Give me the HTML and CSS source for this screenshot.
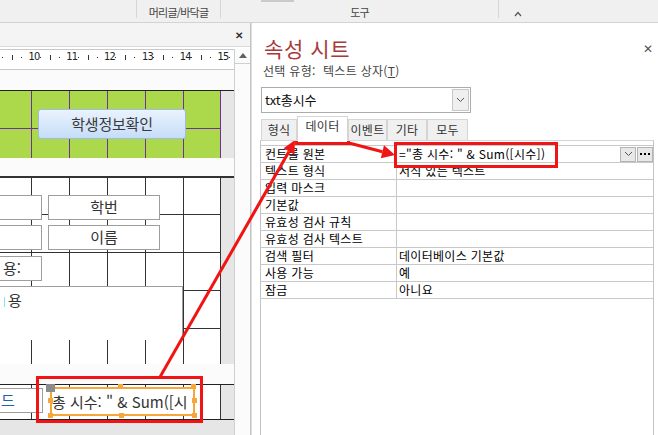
FILE: index.html
```html
<!DOCTYPE html>
<html lang="ko">
<head>
<meta charset="utf-8">
<link rel="stylesheet" href="styles.css">
</head>
<body>
<div class="app">
  <div class="ribbon">
    <div class="rb-spacer"></div>
    <div class="rb-group rb-hf">머리글/바닥글</div>
    <div class="rb-group rb-tools"><span class="rb-mark"></span>도구</div>
    <div class="rb-group rb-end"><svg width="8" height="6" viewBox="0 0 8 6"><polyline points="1,5 4,1.5 7,5" fill="none" stroke="#555" stroke-width="1.2"/></svg></div>
  </div>
  <div class="main">
    <div class="left">
      <div class="lp-title"><span class="lp-x">✕</span></div>
      <div class="lp-body">
        <div class="canvas">
          <div class="ruler">
            <div class="ru-cell"><i class="dot"></i><i class="tick"></i><i class="dot d2"></i><b class="num">10</b></div>
            <div class="ru-cell"><i class="dot"></i><i class="tick"></i><i class="dot d2"></i><b class="num">11</b></div>
            <div class="ru-cell"><i class="dot"></i><i class="tick"></i><i class="dot d2"></i><b class="num">12</b></div>
            <div class="ru-cell"><i class="dot"></i><i class="tick"></i><i class="dot d2"></i><b class="num">13</b></div>
            <div class="ru-cell"><i class="dot"></i><i class="tick"></i><i class="dot d2"></i><b class="num">14</b></div>
            <div class="ru-cell"><i class="dot"></i><i class="tick"></i><i class="dot d2"></i><b class="num">15</b></div>
            <div class="ru-end"><i class="dot"></i></div>
          </div>
          <div class="band band-a"></div>
          <div class="sec sec-green">
            <div class="ga green">
              <div class="btn-info">학생정보확인</div>
            </div>
            <div class="strip strip-purple"></div>
          </div>
          <div class="band band-b"></div>
          <div class="sec sec-detail">
            <div class="ga black">
              <div class="ctl c-a"></div>
              <div class="ctl c-hak">학번</div>
              <div class="ctl c-b"></div>
              <div class="ctl c-name">이름</div>
              <div class="ctl c-yong">용:</div>
              <div class="ctl c-big"><span class="caret"></span>용</div>
            </div>
            <div class="strip"></div>
          </div>
          <div class="band band-c"></div>
          <div class="sec sec-foot">
            <div class="ga black-v">
              <div class="ctl c-field">드</div>
              <div class="c-sel">총 시수: " &amp; Sum([시</div>
              <span class="hd hd-gray"></span>
              <span class="hd hd-tm"></span>
              <span class="hd hd-tr"></span>
              <span class="hd hd-lm"></span>
              <span class="hd hd-rm"></span>
              <span class="hd hd-bl"></span>
              <span class="hd hd-bm"></span>
              <span class="hd hd-br"></span>
            </div>
            <div class="strip"></div>
          </div>
          <div class="grayfill"></div>
        </div>
        <div class="vscroll">
          <div class="vs-up"><svg width="8" height="5" viewBox="0 0 8 5"><polygon points="0,5 4,0 8,5" fill="#606060"/></svg></div>
        </div>
      </div>
    </div>
    <div class="right">
      <div class="rp-head">
        <div class="rp-title">속성 시트</div>
        <div class="rp-close">✕</div>
      </div>
      <div class="rp-sub">선택 유형:&nbsp; 텍스트 상자(<u>T</u>)</div>
      <div class="combo">
        <div class="combo-text">txt총시수</div>
        <div class="combo-btn"><svg width="9" height="6" viewBox="0 0 9 6"><polyline points="1,1 4.5,4.5 8,1" fill="none" stroke="#555" stroke-width="1"/></svg></div>
      </div>
      <div class="tabs">
        <div class="tab t1">형식</div>
        <div class="tab t2 active">데이터</div>
        <div class="tab t3">이벤트</div>
        <div class="tab t4">기타</div>
        <div class="tab t5">모두</div>
      </div>
      <div class="tabpanel">
        <div class="pgrid">
          <div class="pl">컨트롤 원본</div>
          <div class="pv pv-src"><span class="pv-text">="총 시수: " &amp; Sum([시수])</span><span class="mini-btn"><svg width="9" height="6" viewBox="0 0 9 6"><polyline points="1,1 4.5,4.5 8,1" fill="none" stroke="#555" stroke-width="1"/></svg></span><span class="mini-btn dots"><svg width="10" height="4" viewBox="0 0 10 4"><rect x="0" y="1" width="2" height="2" fill="#000"/><rect x="4" y="1" width="2" height="2" fill="#000"/><rect x="8" y="1" width="2" height="2" fill="#000"/></svg></span></div>
          <div class="pl">텍스트 형식</div><div class="pv">서식 있는 텍스트</div>
          <div class="pl">입력 마스크</div><div class="pv"></div>
          <div class="pl">기본값</div><div class="pv"></div>
          <div class="pl">유효성 검사 규칙</div><div class="pv"></div>
          <div class="pl">유효성 검사 텍스트</div><div class="pv"></div>
          <div class="pl">검색 필터</div><div class="pv">데이터베이스 기본값</div>
          <div class="pl">사용 가능</div><div class="pv">예</div>
          <div class="pl">잠금</div><div class="pv">아니요</div>
        </div>
      </div>
    </div>
  </div>
</div>
<svg class="marks" width="658" height="435" viewBox="0 0 658 435">
  <rect x="37.5" y="377.5" width="164" height="44" fill="none" stroke="#f01414" stroke-width="3"/>
  <rect x="296.5" y="120.5" width="52" height="23" fill="none" stroke="#f01414" stroke-width="3"/>
  <rect x="395.5" y="143.5" width="161" height="23" fill="none" stroke="#f01414" stroke-width="3"/>
  <line x1="160" y1="377" x2="289" y2="151.4" stroke="#f01414" stroke-width="3"/>
  <polygon points="295,140 294.4,154.6 283.6,148.2" fill="#f01414"/>
  <line x1="349" y1="143" x2="382.4" y2="151.7" stroke="#f01414" stroke-width="3"/>
  <polygon points="395,155 380.8,158.2 384,145.2" fill="#f01414"/>
</svg>
</body>
</html>
```

FILE: styles.css
```css
* { box-sizing: border-box; }
html, body { margin: 0; padding: 0; }
body {
  width: 658px;
  height: 435px;
  overflow: hidden;
  position: relative;
  background: #fff;
  font-family: "Noto Sans CJK KR", "Noto Sans", sans-serif;
  color: #222;
}
.app { display: flex; flex-direction: column; height: 435px; }

/* ribbon */
.ribbon {
  height: 23px;
  flex: none;
  display: flex;
  background: #f0f0f0;
  border-bottom: 1px solid #d3d3d3;
  font-size: 11px;
  color: #444;
}
.rb-spacer { width: 136px; flex: none; }
.rb-group {
  height: 18px;
  flex: none;
  border-left: 1px solid #d6d6d6;
  display: flex;
  justify-content: center;
  padding-top: 5px;
  line-height: 14px;
  letter-spacing: -0.8px;
  position: relative;
}
.rb-hf { width: 84px; }
.rb-tools { width: 278px; }
.rb-mark { position: absolute; top: 0; left: 40px; width: 33px; height: 2px; background: #cacaca; }
.rb-end { flex: 1; justify-content: flex-start; padding: 11px 0 0 15px; }
.rb-end svg { display: block; }

/* main */
.main { flex: 1; display: flex; min-height: 0; }
.left {
  width: 251px;
  flex: none;
  display: flex;
  flex-direction: column;
  border-right: 1px solid #c4c4c4;
}
.lp-title {
  height: 24px;
  flex: none;
  background: #f4f4f4;
  border-bottom: 1px solid #d9d9d9;
  display: flex;
  justify-content: flex-end;
  align-items: center;
  padding-right: 7px;
  font-size: 10px;
  font-weight: bold;
  color: #333;
}
.lp-body { flex: 1; display: flex; padding-top: 2px; background: #fff; min-height: 0; }
.canvas { width: 234px; flex: none; display: flex; flex-direction: column; overflow: hidden; }
.vscroll { width: 16px; flex: none; border-left: 1px solid #cfcfcf; background: #fbfbfb; }
.vs-up {
  height: 15px;
  border-bottom: 1px solid #cfcfcf;
  display: flex;
  align-items: center;
  justify-content: center;
  padding-bottom: 1px;
}
.vs-up svg { display: block; }

/* ruler */
.ruler {
  height: 21px;
  flex: none;
  border-top: 1px solid #c8c8c8;
  border-bottom: 1px solid #c8c8c8;
  display: flex;
  align-items: center;
  padding-bottom: 5px;
  background: #fff;
}
.ru-cell { width: 37.8px; flex: none; display: flex; align-items: center; }
.ru-cell > * { flex: none; }
.dot { display: block; width: 1px; height: 1px; background: #333; margin-left: 2px; margin-top: 1px; }
.tick { display: block; width: 1px; height: 5px; background: #333; margin-left: 9px; }
.dot.d2 { margin-left: 8px; }
.num {
  display: block;
  width: 12px;
  margin-left: 6px;
  font-family: "DejaVu Sans Condensed", "Liberation Sans", sans-serif;
  font-weight: normal;
  font-size: 11px;
  line-height: 12px;
  letter-spacing: -0.8px;
  text-align: center;
  color: #222;
}
.ru-end { display: flex; align-items: center; }

/* sections */
.band { flex: none; background: #fbfbfb; }
.band-a { height: 20px; }
.band-b { height: 18px; }
.band-c { height: 20px; }
.sec { flex: none; display: flex; }
.sec-green { height: 68px; border-top: 1px solid #222; }
.sec-detail { height: 188px; border-top: 2px solid #333; }
.sec-foot { height: 36px; border-top: 1px solid #222; border-bottom: 1px solid #222; }
.grayfill { flex: 1; background: #e6e6e6; }
.ga { width: 220px; flex: none; position: relative; background-size: 38px 38px; }
.strip { flex: 1; background: #e6e6e6; border-left: 1px solid #333; }
.strip-purple { border-left-color: #7030a0; }
.green {
  background-color: #abd94b;
  background-image:
    linear-gradient(to right, transparent 37px, #7030a0 37px),
    linear-gradient(to bottom, transparent 37px, #7030a0 37px);
  background-position: -6px 0;
}
.black {
  background-color: #fff;
  background-image:
    linear-gradient(to right, transparent 37px, #333 37px),
    linear-gradient(to bottom, transparent 37px, #333 37px);
  background-position: -6px -1px;
}
.black-v {
  background-color: #fff;
  background-image: linear-gradient(to right, transparent 37px, #333 37px);
  background-position: -6px 0;
}

.btn-info {
  position: absolute;
  left: 38px;
  top: 18px;
  width: 148px;
  height: 30px;
  border: 1px solid #9dbce4;
  border-radius: 3px;
  background: linear-gradient(to bottom, #eaf3fe, #c6ddf8);
  font-size: 15px;
  line-height: 28px;
  text-align: center;
  color: #3a3a3a;
  letter-spacing: -0.2px;
}

.ctl {
  position: absolute;
  background: #fff;
  border: 1px solid #9e9e9e;
  font-size: 15px;
  line-height: 22px;
  color: #333;
  white-space: nowrap;
  overflow: hidden;
}
.c-a { left: -1px; top: 17px; width: 43px; height: 25px; }
.c-hak { left: 48px; top: 17px; width: 112px; height: 25px; text-align: center; }
.c-b { left: -1px; top: 47px; width: 43px; height: 25px; }
.c-name { left: 48px; top: 47px; width: 112px; height: 25px; text-align: center; }
.c-yong { left: -1px; top: 78px; width: 43px; height: 25px; padding-left: 3px; }
.c-big { left: -1px; top: 108px; width: 184px; height: 54px; padding-left: 4px; border-bottom: none; line-height: 26px; }
.caret { display: inline-block; width: 1px; height: 10px; background: #7fe6ff; margin-right: 3px; vertical-align: -1px; }
.c-field { left: -1px; top: 3px; width: 44px; height: 25px; color: #1f5fb8; padding-left: 1px; }
.c-sel {
  position: absolute;
  left: 50px;
  top: 2px;
  width: 145px;
  height: 29px;
  border: 2px solid #f7a63c;
  background: #fff;
  font-size: 15px;
  line-height: 25px;
  color: #333;
  white-space: nowrap;
  overflow: hidden;
  padding-left: 0;
}
.hd { position: absolute; width: 5px; height: 5px; background: #f7a63c; }
.hd-gray { left: 46px; top: -1px; width: 9px; height: 8px; background: #8c8c8c; }
.hd-tm { left: 118px; top: -1px; }
.hd-tr { left: 191px; top: -1px; }
.hd-lm { left: 48px; top: 13px; }
.hd-rm { left: 192px; top: 13px; }
.hd-bl { left: 48px; top: 28px; }
.hd-bm { left: 119px; top: 28px; }
.hd-br { left: 192px; top: 28px; }

/* right panel */
.right {
  flex: 1;
  min-width: 0;
  border-left: 1px solid #dedede;
  display: flex;
  flex-direction: column;
  background: #fff;
}
.rp-head {
  display: flex;
  justify-content: space-between;
  align-items: flex-start;
  padding: 12px 5px 0 12px;
  flex: none;
}
.rp-title { font-size: 21px; line-height: 26px; color: #a63a3c; letter-spacing: 0.6px; }
.rp-close { font-size: 12px; line-height: 14px; margin-top: 6px; color: #555; }
.rp-sub {
  margin: 2px 0 0 11px;
  font-size: 12px;
  line-height: 16px;
  color: #444;
  letter-spacing: 0.3px;
  flex: none;
}
.combo {
  margin: 8px 0 0 9px;
  width: 210px;
  height: 26px;
  flex: none;
  border: 1px solid #acacac;
  display: flex;
}
.combo-text { flex: 1; font-size: 13px; line-height: 24px; padding-left: 3px; color: #111; }
.combo-btn {
  width: 17px;
  margin: 1px;
  border: 1px solid #c6c6c6;
  background: #efefef;
  display: flex;
  align-items: center;
  justify-content: center;
}
.combo-btn svg, .mini-btn svg { display: block; }
.tabs {
  margin: 4px 0 0 9px;
  height: 24px;
  flex: none;
  display: flex;
  align-items: flex-end;
  position: relative;
  z-index: 1;
  margin-bottom: -1px;
}
.tab {
  height: 22px;
  background: #f0f0f0;
  border: 1px solid #d5d5d5;
  border-bottom: 1px solid #d5d5d5;
  font-size: 12px;
  line-height: 20px;
  text-align: center;
  color: #333;
  flex: none;
  letter-spacing: 0.3px;
}
.t1 { width: 36px; }
.t2 { width: 51px; }
.t3 { width: 39px; }
.t4 { width: 40px; }
.t5 { width: 41px; }
.tab.active { height: 25px; background: #fff; border-bottom-color: #fff; line-height: 18px; padding-bottom: 4px; }
.tabpanel {
  flex: 1;
  margin: 0 4px 0 8px;
  border-top: 1px solid #d5d5d5;
  border-left: 1px solid #c4c4c4;
  border-right: 1px solid #c4c4c4;
  padding-top: 4px;
  min-height: 0;
}
.pgrid {
  display: grid;
  grid-template-columns: 136px 1fr;
  grid-auto-rows: 17px;
  border-top: 1px solid #c8c8c8;
}
.pl, .pv {
  border-bottom: 1px solid #c8c8c8;
  font-size: 12px;
  line-height: 16px;
  color: #000;
  white-space: nowrap;
  overflow: hidden;
  letter-spacing: 0.3px;
}
.pl { padding-left: 4px; border-right: 1px solid #c8c8c8; }
.pv { padding-left: 2px; }
.pv-src { display: flex; align-items: center; padding-right: 0; overflow: visible; }
.pv-text { flex: 1; }
.mini-btn {
  width: 16px;
  height: 15px;
  flex: none;
  border: 1px solid #b4b4b4;
  background: #e8e8e8;
  display: flex;
  align-items: center;
  justify-content: center;
  margin-left: 1px;
}

.marks { position: absolute; left: 0; top: 0; pointer-events: none; }
```
